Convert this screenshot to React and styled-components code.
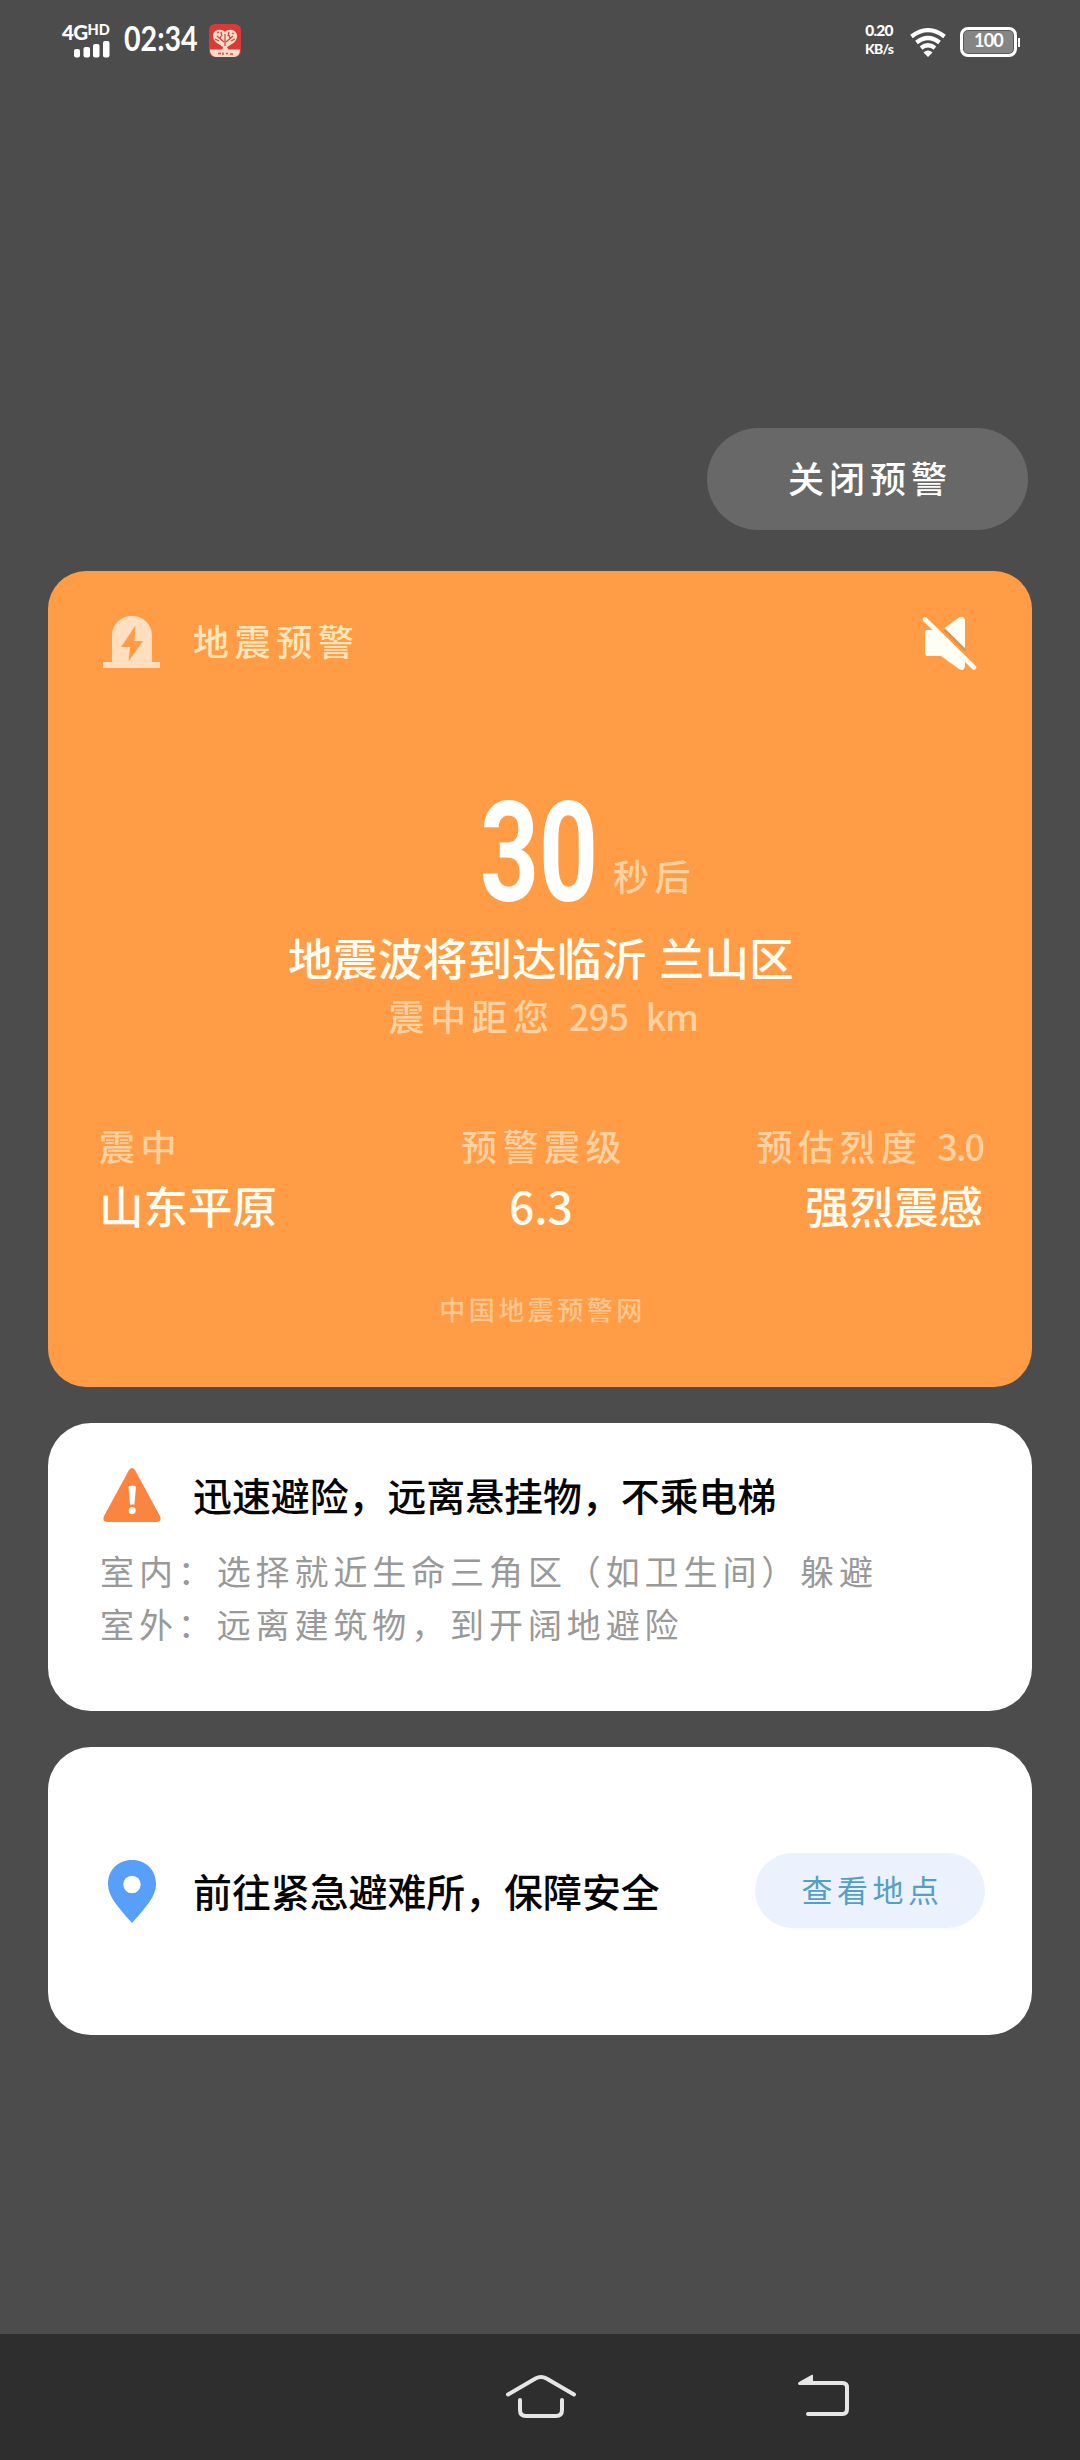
import styled, { createGlobalStyle } from "styled-components";

const GlobalStyle = createGlobalStyle`
  * {
    box-sizing: border-box;
  }

  body {
    margin: 0;
    background-color: #4c4c4c;
    font-family: "Noto Sans CJK SC", "Liberation Sans", sans-serif;
  }

  svg {
    display: block;
    flex-shrink: 0;
  }

  p, h2, h3 {
    margin: 0;
    font-weight: 400;
  }

  button {
    border: none;
    padding: 0;
    font-family: inherit;
  }
`

const Page = styled.div`
  display: flex;
  flex-direction: column;
  width: 1080px;
  height: 2460px;
  background-color: #4c4c4c;
  overflow: hidden;
`

const StatusBar = styled.header`
  display: flex;
  justify-content: space-between;
  height: 80px;
  padding: 24px 60px 0 62px;
  color: #ffffff;
`

const StatusGroup = styled.div`
  display: flex;
  align-items: flex-start;
`

const Signal = styled.div`
  display: flex;
  flex-direction: column;
  align-items: flex-end;
  width: 48px;
  margin-right: 14px;
`

const Network = styled.div`
  display: flex;
  align-self: flex-start;
  font-family: Lato, sans-serif;
  font-weight: 900;
  font-size: 20.5px;
  line-height: 17px;
  letter-spacing: -0.6px;

  small {
    font-size: 14.5px;
    line-height: 12px;
    letter-spacing: 0;
  }
`

/* text squeezed horizontally into a box of a known width */
const Narrow = styled.span`
  display: inline-block;
  width: ${({ $width }) => $width}px;
  white-space: nowrap;
  transform: scaleX(${({ $scale }) => $scale});
  transform-origin: left center;
`

const Time = styled(Narrow)`
  font-family: Lato, sans-serif;
  font-weight: 700;
  font-size: 34px;
  line-height: 28px;
  margin-right: 11px;
`

const Speed = styled.div`
  width: 28px;
  margin-right: 17px;
  font-family: Lato, sans-serif;
  font-weight: 900;
  font-size: 15.5px;
  line-height: 12px;
  letter-spacing: -0.8px;
  text-align: center;

  div + div {
    margin-top: 7px;
    font-size: 14px;
  }
`

const WifiSlot = styled.div`
  padding-top: 4px;
`

const Battery = styled.div`
  display: flex;
  align-items: center;
  margin: 3px 0 0 14px;

  &::after {
    content: "";
    width: 2px;
    height: 9px;
    margin-left: 1px;
    background-color: #ffffff;
  }
`

const BatteryBody = styled.div`
  display: flex;
  align-items: center;
  justify-content: center;
  width: 57px;
  height: 30px;
  border: 3px solid #ffffff;
  border-radius: 8px;
  background-color: #858585;
  box-shadow: inset 0 0 0 1px #5a5a5a;
  font-family: Lato, sans-serif;
  font-weight: 700;
  font-size: 18px;
  line-height: 18px;
  letter-spacing: -0.8px;
  padding-bottom: 4px;
`

const Main = styled.main`
  display: flex;
  flex-direction: column;
  flex: 1;
  padding: 348px 48px 0 48px;
`

const CloseButton = styled.button`
  align-self: flex-end;
  width: 321px;
  height: 102px;
  margin-right: 4px;
  padding: 0 0 4px 5px;
  border-radius: 51px;
  background-color: #686868;
  color: #ffffff;
  font-size: 36px;
  font-weight: 500;
  letter-spacing: 5px;
`

const AlertCard = styled.section`
  display: flex;
  flex-direction: column;
  height: 816px;
  margin-top: 41px;
  padding: 45px 49px 0 51px;
  border-radius: 38px;
  background-color: #ff9c45;
  color: #fffdf2;
`

const AlertHeader = styled.div`
  display: flex;
  align-items: flex-start;
  justify-content: space-between;
  height: 54px;
  padding-right: 5px;
`

const AlertName = styled.div`
  display: flex;
  align-items: flex-start;
  margin-left: 4px;
  color: #ffe6b8;

  h2 {
    margin-left: 32px;
    font-size: 36px;
    font-weight: 500;
    line-height: 48px;
    letter-spacing: 5.6px;
  }
`

const Countdown = styled.div`
  display: flex;
  align-items: flex-end;
  justify-content: center;
  height: 102px;
  margin-top: 130px;
  padding-left: 94px;
  color: #ffffff;
`

const Seconds = styled(Narrow)`
  font-family: Roboto, sans-serif;
  font-weight: 700;
  font-size: 140px;
  line-height: 98px;
`

const SoftText = styled.span`
  color: #ffd1a0;
  font-size: 36px;
  font-weight: 500;
  line-height: 54px;
  letter-spacing: 5.5px;
`

const Latin = styled.span`
  margin-left: ${({ $gap }) => $gap}px;
  letter-spacing: ${({ $tracking }) => $tracking}px;
`

const Arrival = styled.h3`
  margin-top: 27px;
  font-size: 44.8px;
  font-weight: 500;
  line-height: 56px;
  word-spacing: 3px;
  text-align: center;
`

const Distance = styled.p`
  margin-top: 3px;
  padding-left: 4px;
  text-align: center;
  line-height: 54px;
`

const Stats = styled.div`
  display: grid;
  grid-template-columns: 1fr 1fr 1fr;
  margin-top: 67px;
`

const Stat = styled.div`
  display: flex;
  flex-direction: column;
  align-items: ${({ $align }) => $align};

  ${SoftText} {
    margin-right: ${({ $align }) => ($align === "center" ? "-6px" : "0")};
    white-space: nowrap;
  }
`

const StatValue = styled.strong`
  margin-top: 6px;
  font-size: 44.5px;
  font-weight: 500;
  line-height: 54px;
`

const Source = styled.p`
  margin-top: 57px;
  padding-left: 3px;
  color: #ffc78f;
  font-size: 26px;
  font-weight: 500;
  line-height: 40px;
  letter-spacing: 3.5px;
  text-align: center;
`

const Card = styled.section`
  height: 288px;
  margin-top: 36px;
  border-radius: 43px;
  background-color: #ffffff;
`

const TipsCard = styled(Card)`
  padding: 45px 52px 0 52px;
`

const ShelterCard = styled(Card)`
  display: flex;
  align-items: center;
  padding: 0 47px 0 60px;
`

const TipsHeader = styled.div`
  display: flex;
  align-items: flex-start;
  padding-left: 3px;
`

const CardTitle = styled.h3`
  margin: -2px 0 0 ${({ $gap }) => $gap}px;
  color: #050505;
  font-size: 38.9px;
  font-weight: 500;
  line-height: 56px;
  white-space: nowrap;
`

const Tips = styled.div`
  margin-top: 22px;
  color: #999999;
  font-size: 34px;
  line-height: 53px;
  letter-spacing: 4.9px;
  white-space: nowrap;
`

const PlaceButton = styled.button`
  width: 230px;
  height: 75px;
  margin: -2px 0 0 auto;
  padding: 0 0 3px 5px;
  border-radius: 38px;
  background-color: #ecf1fe;
  color: #559fc4;
  font-size: 31px;
  letter-spacing: 4.5px;
`

const NavBar = styled.nav`
  display: flex;
  gap: 221px;
  height: 126px;
  padding: 40px 0 0 505px;
  background-color: #2e2e2e;
`

const stats = [
  { label: "震中", value: "山东平原", align: "flex-start" },
  { label: "预警震级", value: "6.3", align: "center" },
  { label: "预估烈度", level: "3.0", value: "强烈震感", align: "flex-end" },
]

const SignalBars = () => (
  <svg width="36" height="17" viewBox="0 0 36 17" fill="#fff">
    <rect x="0" y="8" width="6" height="8.5" rx="2" />
    <rect x="9.5" y="6" width="6.5" height="10.5" rx="2" />
    <rect x="19" y="3" width="6.5" height="13.5" rx="2" />
    <rect x="29" y="0" width="6.5" height="16.5" rx="2" />
  </svg>
)

const AppBadge = () => (
  <svg width="32" height="33" viewBox="0 0 32 33">
    <rect width="32" height="33" rx="6" fill="#d93a35" />
    <path d="M1 25.500H31V27Q30 33 24 33H8Q2 33 1 27Z" fill="#fbdccb" />
    <path d="M16 8C13 4 4 5 4 12C4 18 10 20 14 23L13 27H20L18 23C23 20 28 18 28 12C28 5 19 4 16 8Z" fill="#fbdccb" />
    <path d="M16 10V22M15 18L8 12M17 18L24 12M8 9L10 8M6 15L10 17M12 8L13 12M19 12L20 8M23 9L25 10M22 17L26 15M11 15L12 12M21 14L20 11" stroke="#d04a40" strokeWidth="1.300" fill="none" />
    <path d="M9 29.500H12M14 28.500V31M17 29.500H19M21 30H24" stroke="#d04a40" strokeWidth="1.400" />
  </svg>
)

const Wifi = () => (
  <svg width="36" height="29" viewBox="0 0 36 29" fill="none" stroke="#fff" strokeWidth="4.200">
    <path d="M1.500 8.500Q18 -4.200 34.500 8.500" />
    <path d="M6.500 14.500Q18 5.500 29.500 14.500" />
    <path d="M11 20Q18 14.500 25 20" />
    <path d="M13.500 24.500Q18 20.500 22.500 24.500L18 29Z" fill="#fff" stroke="none" />
  </svg>
)

const Siren = () => (
  <svg width="58" height="52" viewBox="0 0 58 52">
    <path d="M9 46V20C9 8 18 0 29 0S49 8 49 20V46H57V52H0V46Z" fill="#ffdfc0" />
    <path d="M32.500 9.500L18 31H27L25.500 45.500L40 25H31.500Z" fill="#ff9c45" />
  </svg>
)

const Muted = () => (
  <svg width="56" height="56" viewBox="0 0 56 56">
    <path d="M22.500 12L37 1.500Q42 -1 43 4V33Z" fill="#fffef5" />
    <path d="M5 14H12L43 44V50Q42 56 37 53L19 40H5Q3 40 3 38V16Q3 14 5 14Z" fill="#fffef5" />
    <path d="M22.500 14L43.500 34.500" stroke="#dc9350" strokeWidth="2.500" />
    <path d="M3 3.500L52 51.500" stroke="#fffef5" strokeWidth="4.600" strokeLinecap="round" />
  </svg>
)

const Warning = () => (
  <svg width="58" height="54" viewBox="0 0 58 54">
    <path d="M26 2Q29 -2 32 2L57 48Q59 54 54 54H4Q-1 54 1 48Z" fill="#fb8440" />
    <path d="M25.500 19Q25.500 17.500 29 17.500T33 19L31.400 36.500H27Z" fill="#fff" />
    <circle cx="29.200" cy="42.500" r="3.500" fill="#fff" />
  </svg>
)

const Pin = () => (
  <svg width="48" height="63" viewBox="0 0 48 63">
    <path d="M24 0C10 0 0 10 0 24C0 36 9 46 24 63C39 46 48 36 48 24C48 10 38 0 24 0Z" fill="#579ff8" />
    <circle cx="24" cy="24.500" r="8.700" fill="#fff" />
  </svg>
)

const Home = () => (
  <svg width="72" height="46" viewBox="0 0 72 46" fill="none" stroke="#e6e6e6" strokeWidth="4" strokeLinecap="round">
    <path d="M3 20.500L30.500 4.500Q36 1.500 41.500 4.500L69 20.500" />
    <path d="M15 26V36Q15 42 21 42H51Q57 42 57 36V26" />
  </svg>
)

const Back = () => (
  <svg width="52" height="44" viewBox="0 0 52 44" fill="none">
    <path d="M8 9H44.500Q49 9 49 13.500V35Q49 40 44.500 40H10" stroke="#e6e6e6" strokeWidth="4" strokeLinecap="round" />
    <path d="M15 1V11H1Q-1 9.500 1 8L13 1.200Q14.500 0.300 15 1Z" fill="#e6e6e6" />
  </svg>
)

export default function App() {
  return (
    <Page>
      <GlobalStyle />
      <StatusBar>
        <StatusGroup>
          <Signal>
            <Network>4G<small>HD</small></Network>
            <SignalBars />
          </Signal>
          <Time $width={74} $scale={0.84}>02:34</Time>
          <AppBadge />
        </StatusGroup>
        <StatusGroup>
          <Speed>
            <div>0.20</div>
            <div>KB/s</div>
          </Speed>
          <WifiSlot><Wifi /></WifiSlot>
          <Battery>
            <BatteryBody>100</BatteryBody>
          </Battery>
        </StatusGroup>
      </StatusBar>

      <Main>
        <CloseButton>关闭预警</CloseButton>

        <AlertCard>
          <AlertHeader>
            <AlertName>
              <Siren />
              <h2>地震预警</h2>
            </AlertName>
            <Muted />
          </AlertHeader>

          <Countdown>
            <Seconds $width={133} $scale={0.735}>30</Seconds>
            <SoftText>秒后</SoftText>
          </Countdown>
          <Arrival>地震波将到达临沂 兰山区</Arrival>
          <Distance>
            <SoftText>
              震中距您 <Latin $gap={1} $tracking={-0.8}>295</Latin> <Latin $gap={4} $tracking={-1.5}>km</Latin>
            </SoftText>
          </Distance>

          <Stats>
            {stats.map((item) => (
              <Stat key={item.label} $align={item.align}>
                <SoftText>
                  {item.label}
                  {item.level && <> <Latin $gap={1} $tracking={-2}>{item.level}</Latin></>}
                </SoftText>
                <StatValue>{item.value}</StatValue>
              </Stat>
            ))}
          </Stats>

          <Source>中国地震预警网</Source>
        </AlertCard>

        <TipsCard>
          <TipsHeader>
            <Warning />
            <CardTitle $gap={32}>迅速避险，远离悬挂物，不乘电梯</CardTitle>
          </TipsHeader>
          <Tips>
            <p>室内：选择就近生命三角区（如卫生间）躲避</p>
            <p>室外：远离建筑物，到开阔地避险</p>
          </Tips>
        </TipsCard>

        <ShelterCard>
          <Pin />
          <CardTitle $gap={37}>前往紧急避难所，保障安全</CardTitle>
          <PlaceButton>查看地点</PlaceButton>
        </ShelterCard>
      </Main>

      <NavBar>
        <Home />
        <Back />
      </NavBar>
    </Page>
  )
}
